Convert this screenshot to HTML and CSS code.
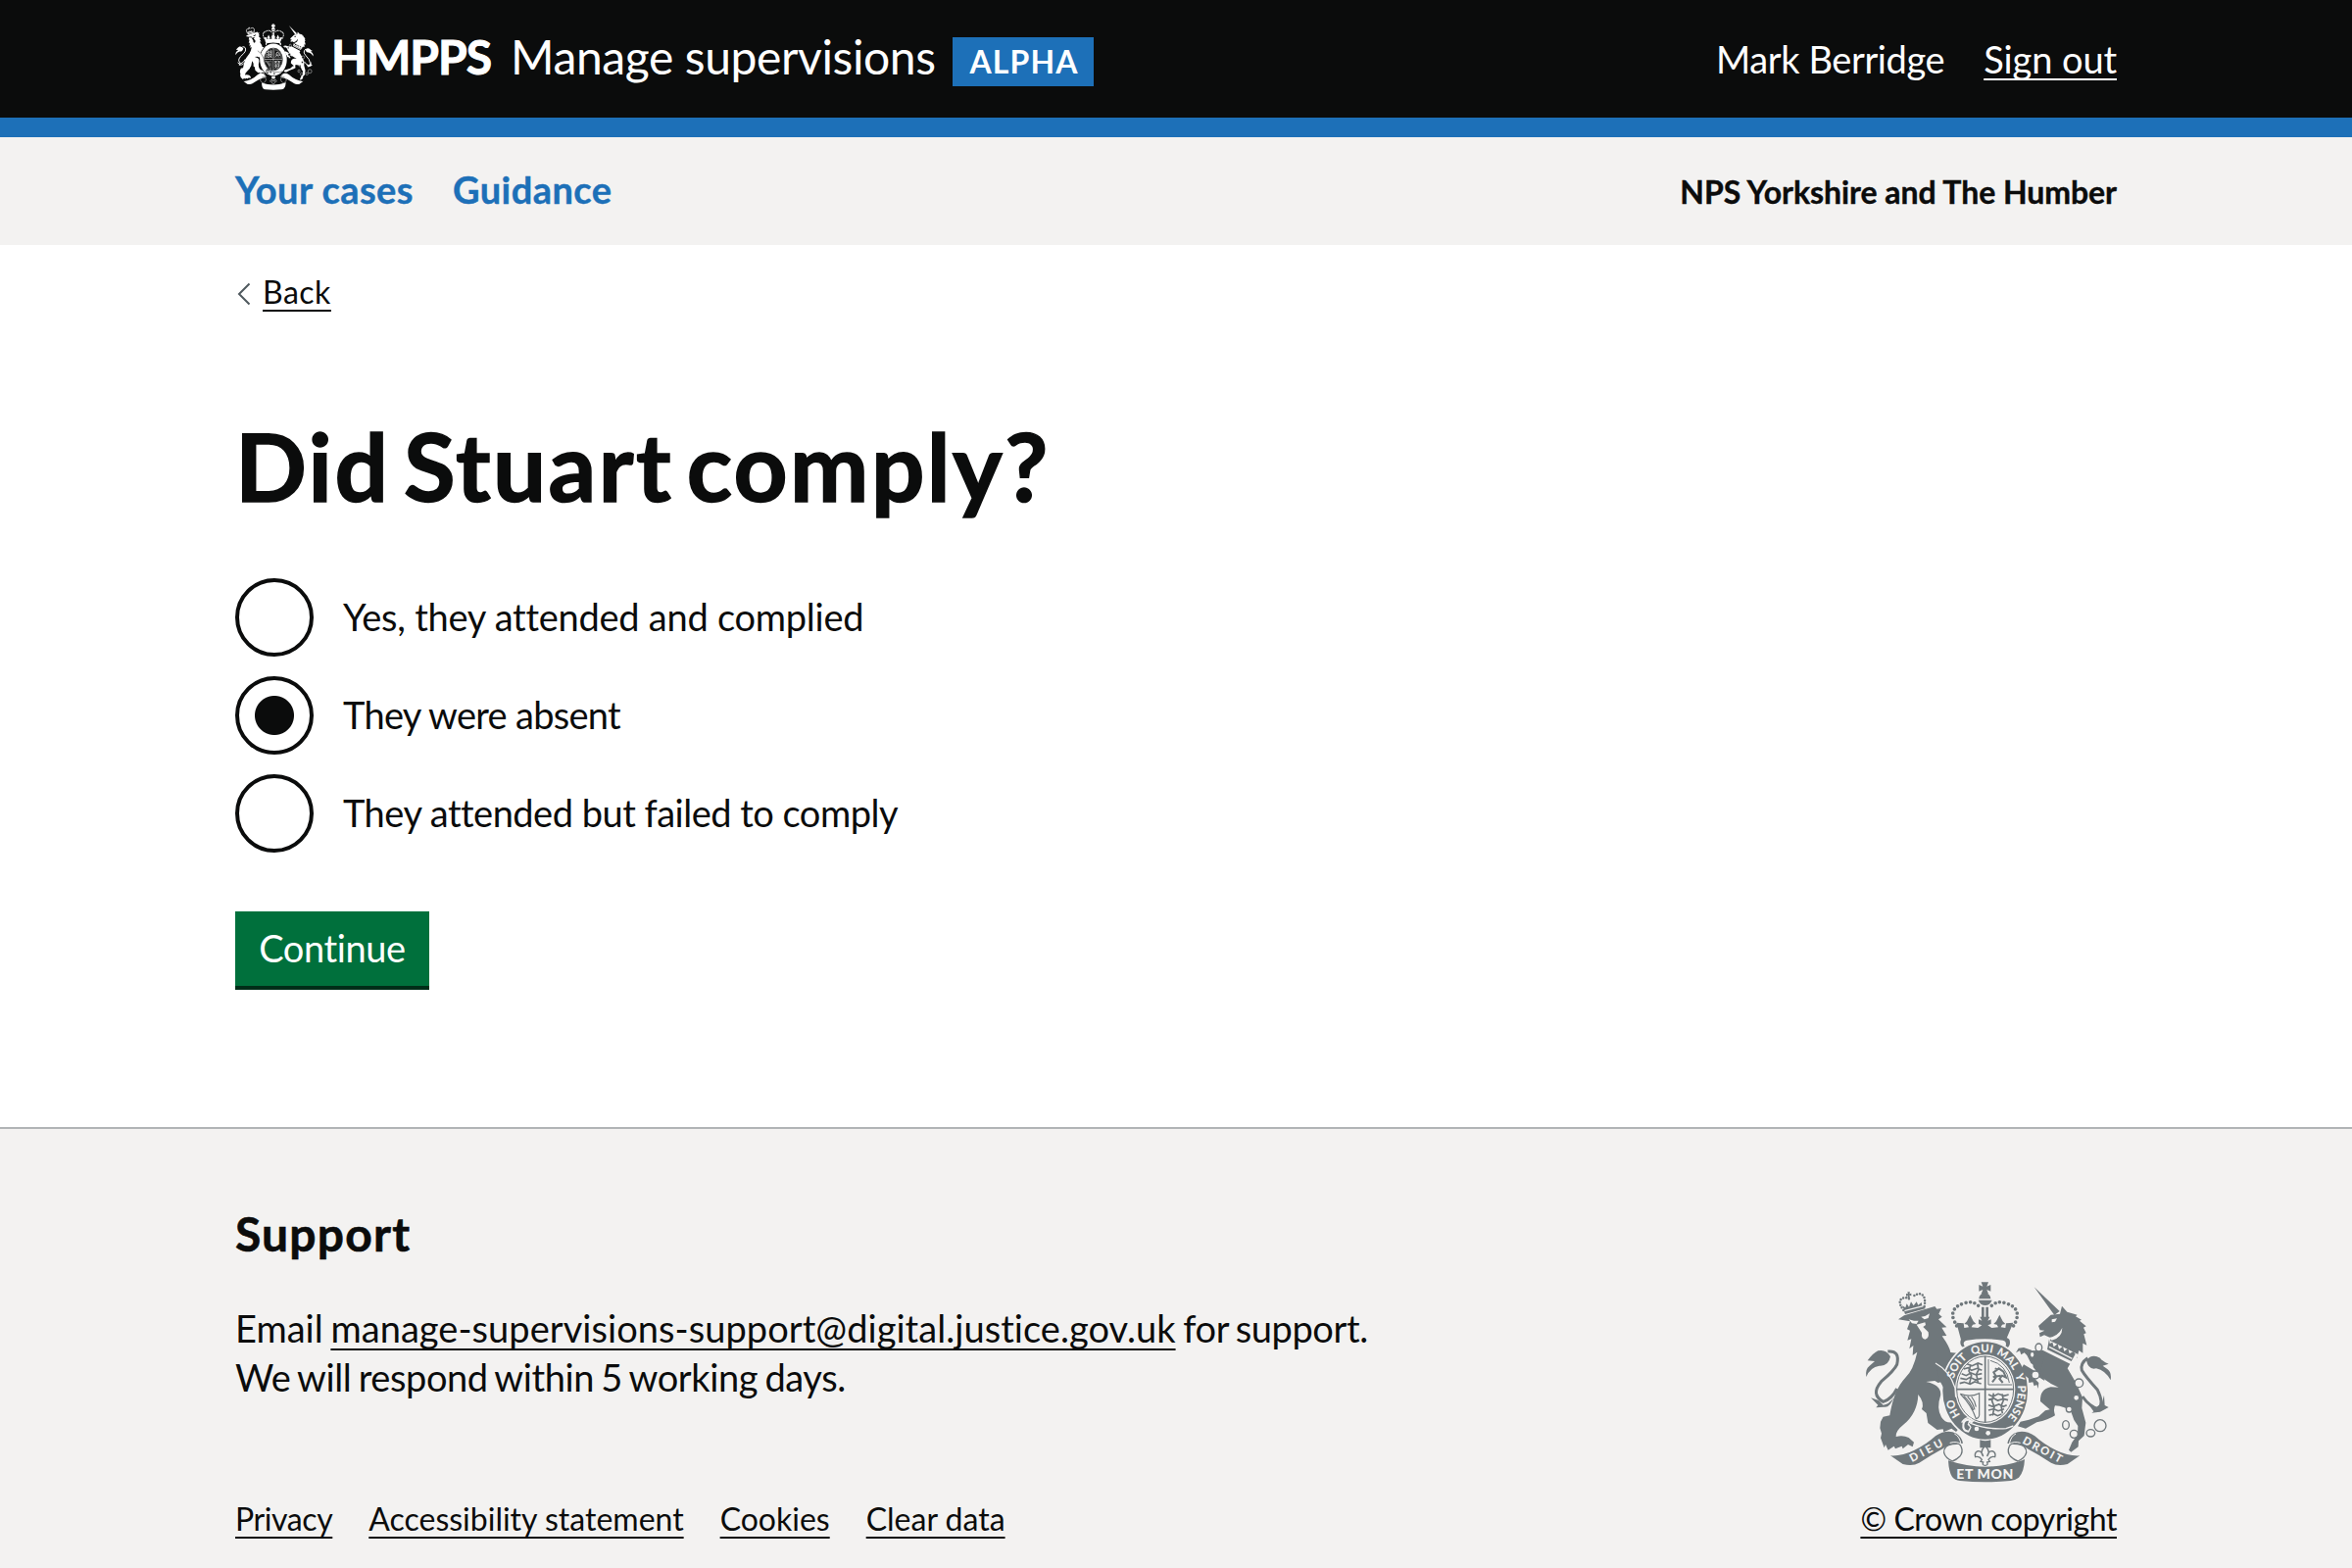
FILE: index.html
```html
<!DOCTYPE html>
<html lang="en">
<head>
<meta charset="utf-8">
<title>Did Stuart comply? – Manage supervisions</title>
<link rel="stylesheet" href="styles.css">
</head>
<body>
<svg class="defs" aria-hidden="true">
  <defs>
    <symbol id="crest" viewBox="70 50 756 618" preserveAspectRatio="none">
      <!-- royal crown -->
      <g fill="currentColor">
        <path d="M426 54h22l-5 13 12-5v20l-12-5 5 13h-22l5-13-12 5V62l12 5z"/>
        <path d="M419 105a18 18 0 0 1 36 0z"/><path d="M417 109h42q-6 16-21 16t-21-16z"/>
        <path d="M427 130h8v33h-8zM440 130h8v33h-8z"/>
        <path d="M350 178l22 2 2 14 14-2 -4-8-10-2 8-8 10-20 10 20 8 8-10 2-4 8 20 2 12-8-10-4v-14l10 4-6-12h30l-6 12 10-4v14l-10 4 12 8 20-2-4-8-10-2 8-8 10-20 10 20 8 8-10 2-4 8 14 2 2-14 22-2-22 52q-70-14-138 0z"/>
        <path d="M362 238q0-12 12-14 64-16 128 0 12 2 12 14t-10 18h-12q10-4 10-12 0-10-10-12-54-8-110 0-10 2-10 10t8 12h-8q-10-4-10-16z"/>
      </g>
      <path d="M417 126Q400 110 376 118 332 130 340 164 346 180 352 190M458 126q17-16 41-8 44 12 36 46-4 16-12 26" fill="none" stroke="currentColor" stroke-linecap="round" stroke-width="11" stroke-dasharray="0 13.5"/>
      <!-- lion -->
      <g fill="currentColor">
        <path d="M190 144l62-16 3 7-62 17z"/>
        <path d="M190 140l-6-14 10 6 4-12 7 10 6-16 8 12 9-12 5 10 10-8 2 10z"/>
        <path d="M200 84h8l-2 6 6-2v8l-6-2 2 7-8 1 2-7-6 2v-8l6 1z"/>
        <path d="M172 168l18-12 94-28 6 8 14-2-8 17 10 9-11 8 25 24-15 1 15 25-14 1q24 34 26 50l20 2q-24 20-30 62 26 26 34 66l-10 6-14-8-8-12 4-12-12-5-8-10-14 4-10-6-27 3q46 9 45 40-14 42 2 68 14 23 42 14l18-8 3 14 8 10-6 14-9-11-11 12-14-10-24 11-2-9-18 2-28-21-5-30-14-12q9-20-11-45-2 58-46 93-24 19-22 36 22-5 39 3l16 14-4 14-14-7-16 13-3-8-20 8-4-8-18 12-8-17-4 10-11-30 3-14-5-16 2-20 8-15 20-4q12-78 48-116 24-22 36-78l-14 10 2-30-12 10 6-30-12 4 8-30-9-4 9-24z"/>
        <path d="M74 344q-4-24 10-34l16-14-22-2q18-24 32-30 24-6 38 18-6 30-34 28-28 4-40 34z"/>
      </g>
      <path d="M140 266q38-4 28 40-8 18-48 52-34 40 6 62 26-8 42-40" fill="none" stroke="currentColor" stroke-width="9"/>
      <path d="M88 408l24 8 14 14q16 0 32-22-12 32-30 28l-24 2 6-8z" fill="currentColor"/>
      <path d="M204 168l16 4 14 0-6 10-14-2zM242 160l12-2 14-8-4 14-12 4zM228 184l26-7 2 8-8 6 16 16q4 20-10 22-12-2-10-20z" class="cut"/>
      <path d="M188 140q-22-30 0-38 11-2 17 3M252 128q6-34-14-38-12 0-20 8" fill="none" stroke="currentColor" stroke-linecap="round" stroke-width="7.500" stroke-dasharray="0 9"/>
      <!-- unicorn -->
      <g fill="currentColor">
        <path d="M588 69l78 74-16 12z"/>
        <path d="M601 188l38-34 28-3 6-24 16 18 31 9-5 5 18 10-6 3 20 17-8 4 8 17-7 3 9 34-12-6 0 30-12-8-6 24q-40-32-84-46l4-16-20-9-13 6-2-12 16-8-14-1z"/>
        <path d="M614 262l84 42-8 14 26 44 20 45-2 32 12 45-5 40-17 16-1 18-22 16-7-6 10-24 17-24 1-26-12-18-10-28q-20-14-48-16-6 12 0 30-20 14-56 21l-34 19-24-7 8-14 26-6 30-10 20-18 14-3-29-25q-2-38 32-44l24 1q-52-21-78-62l-4-50z"/>
        <path d="M822 354q4-24-10-34l-14-10 18-6q-22-10-26-18-26-14-42 8 6 30 30 24 28 6 44 36zM802 400l-6 22-18 16-26-14 18 26-6 4 26-3 26-14-12-6z"/>
      </g>
      <path d="M752 286q-24 16-18 38 10 18 48 60 20 40 4 58-28-6-50-38" fill="none" stroke="currentColor" stroke-width="9"/>
      <path d="M642 168l16-3-6 10-10 2zM634 224q28-6 40-30 0 30-32 38zM630 230l94 46-14 26-88-40z" class="cut"/>
      <path d="M634 228l2 14 8-4 4 14 12-9 4 16 12-9 4 16 12-9 4 16 12-7 6 8-12 22-74-36z" fill="currentColor"/>
      <path d="M634 252l70 36" class="cutline" stroke-width="4"/>
      <!-- garter and shield -->
      <ellipse cx="438" cy="386" rx="135" ry="154" class="cut"/>
      <ellipse cx="438" cy="386" rx="130" ry="149" fill="currentColor"/>
      <ellipse cx="438" cy="382" rx="92" ry="106" class="cut"/>
      <ellipse cx="438" cy="382" rx="87" ry="101" fill="none" stroke="currentColor" stroke-width="3"/>
      <path d="M438 280v204M350 382h176" stroke="currentColor" stroke-width="5"/>
      <g fill="none" stroke="currentColor" stroke-width="5">
        <path d="M382 304l16 6 18-8 14 5M372 320l14-4 10 8 18-6 14 6M366 334l14 6 14-8 16 6 18-4M362 348l18 4 12-7 16 8 20-5M360 364l14-4 18 6 14-7 20 6M394 306l-6 20 8 14-6 24M414 302l4 20-7 14 6 28"/>
        <path d="M448 290v78h72M454 294q50 12 58 68" stroke-width="3"/><path d="M460 360l12-16-8-14 16-12 14 10 8 18-12-6-8 10 10 12M468 318l10 4M462 344l24-4" stroke-width="6"/>
        <path d="M448 398l14 6 16-8 18 6 14-4M448 414l16-5 12 7 18-5 14 4M448 430l14 5 18-7 14 7 10-5M448 446l16-4 14 6 18-6M450 462l14-5 12 6 12-5M464 394l-5 24 7 18-5 26M490 396l4 20-7 16 4 24"/>
        <path d="M362 396q30 12 58-2v60q2 16-10 18-14-42-48-76zM372 402q20 18 30 44M384 404q16 18 22 40M396 404q10 12 14 32" stroke-width="3.500"/>
      </g>
      <!-- lion's foreleg over the garter -->
      <path d="M286 300q40 20 60 76l2 30-8-8-2 14-10-10-12 6 10-16-10-2 8-8-14-6-12-22z" fill="currentColor"/>
      <path d="M286 302q44 24 60 76l2 28" class="cutline" stroke-width="4"/>
      <!-- unicorn's forelegs -->
      <g fill="currentColor">
        <path d="M618 284q-26 0-38-22l-24-8-16 2-8 14 12-6 4 12 10-6 8 8 12 24 30 20z"/>
        <path d="M612 328l-22-2-34-20-6 10 10 24 10 8 2 14 12-2 4 12 8-4 4 12 2-18-14-14-10-14 20 8 22 14z"/>
      </g>
      <!-- chain -->
      <g class="cutfill" stroke="currentColor" stroke-width="4">
        <ellipse cx="602" cy="254" rx="10" ry="12"/><ellipse cx="582" cy="276" rx="7" ry="9"/><circle cx="592" cy="338" r="12"/><circle cx="725" cy="363" r="13"/>
        <circle cx="717" cy="408" r="9"/><circle cx="695" cy="443" r="9"/><ellipse cx="685" cy="491" rx="10" ry="13"/>
        <circle cx="710" cy="519" r="12"/><ellipse cx="761" cy="516" rx="13" ry="11"/><circle cx="790" cy="493" r="18"/>
      </g>
      <!-- buckle -->
      <path d="M366 484q16-26 36-6l-8 8q50 20 108 16l22-8" class="cutline" stroke-width="4"/>
      <path d="M368 500q-2-30 18-28 12 2 14 10l-12 4 8 12-8 16q-16 0-20-14z" class="cut"/>
      <path d="M374 494q0-16 14-16l-4 12 8 8-6 10q-12-2-12-14z" fill="currentColor"/>
      <g class="cut"><circle cx="412" cy="503" r="7"/><circle cx="447" cy="516" r="7"/></g>
      <!-- fleur-de-lis -->
      <path d="M422 537q16 6 33 0v24h-33z" fill="currentColor"/>
      <path d="M438 555q-18 18-6 32-4-16-16-16-12 4-8 18 12-4 20 8l-4 6 8 2q-4 10 6 10t6-10l8-2-4-6q8-12 20-8 4-14-8-18-12 0-16 16 12-14-6-32z" class="cutfill" stroke="currentColor" stroke-width="4"/>
      <!-- motto ribbon -->
      <g id="ribbon-end">
        <path d="M148 585q36 2 72-16 38-18 66-44 34-22 64-8 16 10 20 30l-20 4q-24 0-44 14-34 18-70 42-20 12-50 4z" fill="currentColor"/>
        <path d="M364 556q-8-14-30-8-24 10-22 28 4 16 26 26M364 556q8 18-4 32-10 10-22 14" fill="none" stroke="currentColor" stroke-width="4"/>
        <path d="M344 518q16 8 20 32-12-10-34-4" class="cutline" stroke-width="3"/>
      </g>
      <use href="#ribbon-end" transform="translate(876 0) scale(-1 1)"/>
      <path d="M325 600q113 38 226 0l8-4q-2 40-18 56-10 8-26 10-77 8-154 0-16-2-24-12-10-14-12-50z" fill="currentColor"/>
    </symbol>
  </defs>
</svg>

<header class="header">
  <div class="container header-row">
    <div class="brand">
      <svg class="brand-crest" aria-hidden="true"><use href="#crest"/></svg>
      <span class="brand-org">HMPPS</span>
      <span class="brand-service">Manage supervisions</span>
      <strong class="tag">ALPHA</strong>
    </div>
    <div class="account">
      <span class="account-name">Mark Berridge</span>
      <a class="link signout" href="#">Sign out</a>
    </div>
  </div>
</header>

<nav class="nav">
  <div class="container nav-row">
    <a class="nav-link" href="#">Your cases</a>
    <a class="nav-link" href="#">Guidance</a>
    <span class="region">NPS Yorkshire and The Humber</span>
  </div>
</nav>

<main class="container main">
  <a class="back" href="#">
    <svg class="chevron" viewBox="0 0 14 24" aria-hidden="true"><path d="M12.500 1.500L2 12l10.500 10.500" fill="none" stroke="#505a5f" stroke-width="2"/></svg>
    <span class="link back-text">Back</span>
  </a>
  <h1 class="title">Did Stuart comply?</h1>
  <form class="form">
    <label class="radio"><input class="radio-input" type="radio" name="comply"><span class="radio-text opt-yes">Yes, they attended and complied</span></label>
    <label class="radio"><input class="radio-input" type="radio" name="comply" checked><span class="radio-text opt-absent">They were absent</span></label>
    <label class="radio"><input class="radio-input" type="radio" name="comply"><span class="radio-text opt-failed">They attended but failed to comply</span></label>
    <button class="button" type="button">Continue</button>
  </form>
</main>

<footer class="footer">
  <div class="container footer-row">
    <div class="support">
      <h2 class="support-title">Support</h2>
      <p class="support-text"><span class="email-lead">Email</span> <a class="link email" href="#">manage-supervisions-support@digital.justice.gov.uk</a> <span class="email-tail">for support.</span><br><span class="respond">We will respond within 5 working days.</span></p>
      <div class="footer-links">
        <a class="link privacy" href="#">Privacy</a>
        <a class="link" href="#">Accessibility statement</a>
        <a class="link" href="#">Cookies</a>
        <a class="link" href="#">Clear data</a>
      </div>
    </div>
    <div class="copyright">
      <svg class="footer-crest" viewBox="70 50 756 618" preserveAspectRatio="none" aria-hidden="true">
        <use href="#crest" x="70" y="50" width="756" height="618"/>
        <path id="motto" d="M438 500A100 116 0 0 1 438 268A100 116 0 0 1 438 500" fill="none"/>
        <g class="motto">
          <text><textPath href="#motto" startOffset="13%">HO</textPath></text>
          <text><textPath href="#motto" startOffset="30%">SOIT</textPath></text>
          <text><textPath href="#motto" startOffset="44%">QUI</textPath></text>
          <text><textPath href="#motto" startOffset="55%">MAL</textPath></text>
          <text><textPath href="#motto" startOffset="68%">Y</textPath></text>
          <text><textPath href="#motto" startOffset="73%">PENSE</textPath></text>
          <text x="214" y="606" transform="rotate(-28 214 606)" textLength="110">DIEU</text>
          <text x="550" y="546" transform="rotate(28 550 546)" textLength="132">DROIT</text>
          <text class="motto-mid" x="350" y="657" textLength="174">ET MON</text>
        </g>
      </svg>
      <a class="link crown" href="#">© Crown copyright</a>
    </div>
  </div>
</footer>
</body>
</html>
```
FILE: styles.css
```css
* { box-sizing: border-box; }
body {
  margin: 0;
  min-height: 1600px;
  display: flex;
  flex-direction: column;
  font-family: Lato, "Open Sans", sans-serif;
  font-size: 38px;
  line-height: 50px;
  color: #0b0c0c;
  background: #fff;
}
.defs { display: none; }
.container { width: 1920px; margin: 0 auto; }
.link {
  color: inherit;
  text-decoration: underline 2px;
  text-underline-offset: 6px;
  text-decoration-skip-ink: none;
}

/* crest fills that take the colour of the surface behind */
.cut { fill: var(--surface); }
.cutfill { fill: var(--surface); }
.cutline { fill: none; stroke: var(--surface); }

.header {
  --surface: #0b0c0c;
  height: 140px;
  background: #0b0c0c;
  border-bottom: 20px solid #1d70b8;
  color: #fff;
}
.header-row { display: flex; justify-content: space-between; align-items: flex-start; }
.brand { display: flex; align-items: flex-start; font-size: 48px; line-height: 60px; white-space: nowrap; }
.brand-crest { width: 80px; height: 68px; margin-top: 24px; }
.brand-org { margin: 28px 0 0 18px; width: 183px; font-weight: 700; letter-spacing: -1px; -webkit-text-stroke: 1px; }
.brand-service { margin-top: 28px; width: 451px; letter-spacing: -0.4px; }
.tag {
  margin-top: 38px;
  width: 144px;
  height: 50px;
  padding: 5px 0 0 2px;
  text-align: center;
  background: #1d70b8;
  font-size: 32px;
  line-height: 40px;
  letter-spacing: 1.1px;
}
.account { display: flex; gap: 40px; padding-top: 35px; }
.account-name { letter-spacing: -0.4px; }
.signout { letter-spacing: -0.1px; text-underline-offset: 5px; }

.nav { height: 110px; background: #f3f2f1; }
.nav-row { display: flex; align-items: baseline; gap: 40px; padding-top: 28px; font-weight: 700; -webkit-text-stroke: 0.4px; }
.nav-link { color: #1d70b8; text-decoration: none; letter-spacing: 0.45px; }
.region { margin-left: auto; font-size: 32px; line-height: 40px; letter-spacing: -0.05px; }

.main { height: 900px; padding-top: 28px; }
.back { display: flex; align-items: center; gap: 13px; height: 40px; color: #0b0c0c; text-decoration: none; font-size: 32px; line-height: 40px; }
.chevron { width: 14px; height: 24px; margin: 4px 0 0 2px; }
.back-text { letter-spacing: 0.5px; margin-left: -1px; }
.title { margin: 102px 0 60px; font-size: 96px; line-height: 110px; font-weight: 700; letter-spacing: 2.4px; word-spacing: -12px; -webkit-text-stroke: 1.5px; }
.form { display: flex; flex-direction: column; align-items: flex-start; gap: 20px; }
.radio { display: flex; align-items: center; gap: 30px; height: 80px; }
.radio-input {
  appearance: none;
  width: 80px;
  height: 80px;
  margin: 0;
  border: 4px solid #0b0c0c;
  border-radius: 50%;
}
.radio-input:checked { background: radial-gradient(circle, #0b0c0c 19.5px, transparent 20.5px); }
.radio-text { padding-bottom: 2px; }
.opt-yes { letter-spacing: -0.25px; }
.opt-absent { letter-spacing: -0.7px; }
.opt-failed { letter-spacing: -0.5px; }
.button {
  margin-top: 40px;
  width: 198px;
  height: 76px;
  padding: 0 0 2px;
  border: 0;
  background: #00703c;
  box-shadow: 0 4px 0 #002d18;
  color: #fff;
  font: inherit;
  letter-spacing: -0.4px;
}

.footer { --surface: #f3f2f1; flex: 1; background: #f3f2f1; border-top: 2px solid #b1b4b6; }
.footer-row { display: flex; justify-content: space-between; align-items: flex-end; padding-top: 77px; }
.support-title { margin: 0 0 41px; font-size: 48px; line-height: 60px; letter-spacing: 1.2px; -webkit-text-stroke: 0.6px; }
.support-text { margin: 0 0 100px; white-space: nowrap; word-spacing: -2px; }
.email { letter-spacing: 0.05px; }
.email-tail { letter-spacing: -0.4px; }
.respond { letter-spacing: -0.4px; }
.footer-links { display: flex; gap: 37px; font-size: 32px; line-height: 40px; }
.privacy { letter-spacing: -0.4px; }
.copyright { display: flex; flex-direction: column; align-items: flex-end; gap: 17px; font-size: 32px; line-height: 40px; }
.footer-crest { width: 252px; height: 206px; margin-right: 5px; color: #6f777b; }
.crown { letter-spacing: -0.4px; }
.motto { fill: #f3f2f1; font: 900 34px Lato, sans-serif; }
.motto-mid { font-size: 42px; }
```
